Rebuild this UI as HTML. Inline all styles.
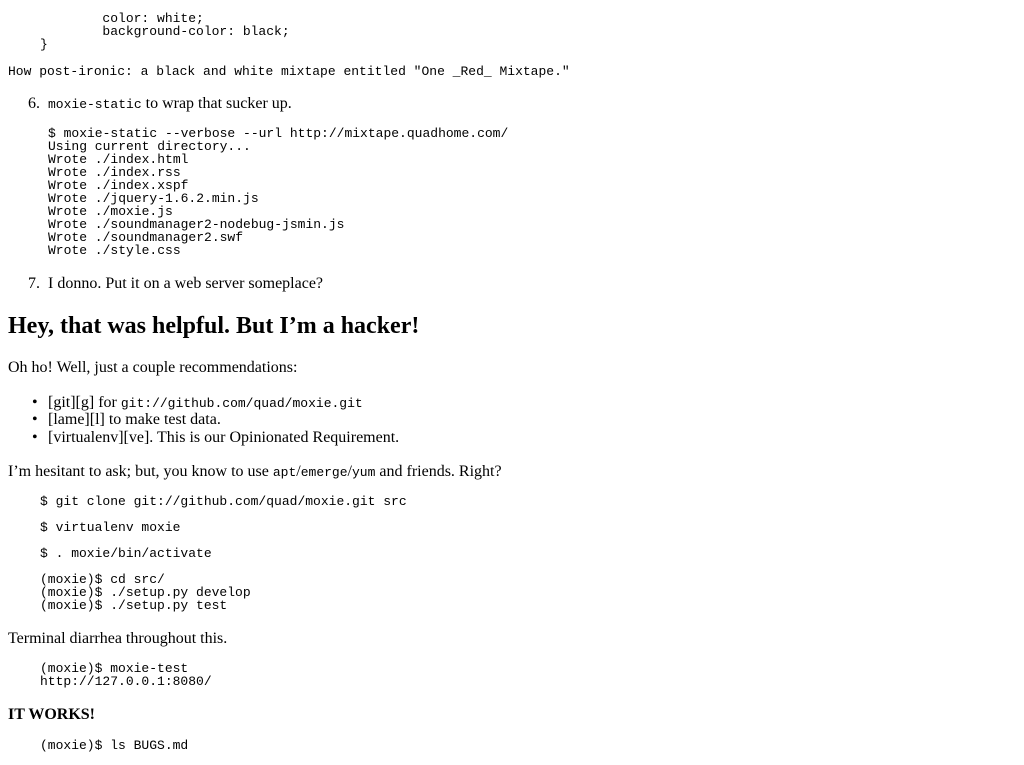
<!DOCTYPE html>
<html><head><meta charset="utf-8"><style>
body{margin:0;background:#fff;color:#000;width:1024px;height:765px;overflow:hidden;position:relative}
.s,.m{position:absolute;white-space:pre;margin:0}
.s{font-family:"Liberation Serif",serif;font-size:16px;line-height:18px}
.m{font-family:"Liberation Mono",monospace;font-size:13px;line-height:13px}
code{font-family:"Liberation Mono",monospace;font-size:13px}
h2{position:absolute;margin:0;font-family:"Liberation Serif",serif;font-size:24px;line-height:28px;font-weight:bold;left:8px;top:312px}
.b{position:absolute;left:32px;font-family:"Liberation Serif",serif;font-size:16px;line-height:18px}
</style></head><body>
<div class="m" style="left:40px;top:12px">        color: white;
        background-color: black;
}</div>
<div class="m" style="left:8px;top:65px">How post-ironic: a black and white mixtape entitled "One _Red_ Mixtape."</div>
<div class="s" style="left:28px;top:95px">6.  <code>moxie-static</code> to wrap that sucker up.</div>
<div class="m" style="left:48px;top:127px">$ moxie-static --verbose --url http://mixtape.quadhome.com/
Using current directory...
Wrote ./index.html
Wrote ./index.rss
Wrote ./index.xspf
Wrote ./jquery-1.6.2.min.js
Wrote ./moxie.js
Wrote ./soundmanager2-nodebug-jsmin.js
Wrote ./soundmanager2.swf
Wrote ./style.css</div>
<div class="s" style="left:28px;top:275px">7.  I donno. Put it on a web server someplace?</div>
<h2>Hey, that was helpful. But I’m a hacker!</h2>
<div class="s" style="left:8px;top:359px">Oh ho! Well, just a couple recommendations:</div>
<div class="b" style="top:394px">•</div><div class="s" style="left:48px;top:394px">[git][g] for <code>git://github.com/quad/moxie.git</code></div>
<div class="b" style="top:411px">•</div><div class="s" style="left:48px;top:411px">[lame][l] to make test data.</div>
<div class="b" style="top:429px">•</div><div class="s" style="left:48px;top:429px">[virtualenv][ve]. This is our Opinionated Requirement.</div>
<div class="s" style="left:8px;top:463px">I’m hesitant to ask; but, you know to use <code>apt</code>/<code>emerge</code>/<code>yum</code> and friends. Right?</div>
<div class="m" style="left:40px;top:495px">$ git clone git://github.com/quad/moxie.git src</div>
<div class="m" style="left:40px;top:521px">$ virtualenv moxie</div>
<div class="m" style="left:40px;top:547px">$ . moxie/bin/activate</div>
<div class="m" style="left:40px;top:573px">(moxie)$ cd src/
(moxie)$ ./setup.py develop
(moxie)$ ./setup.py test</div>
<div class="s" style="left:8px;top:630px">Terminal diarrhea throughout this.</div>
<div class="m" style="left:40px;top:662px">(moxie)$ moxie-test
http://127.0.0.1:8080/</div>
<div class="s" style="left:8px;top:706px;font-weight:bold">IT WORKS!</div>
<div class="m" style="left:40px;top:739px">(moxie)$ ls BUGS.md</div>
</body></html>
